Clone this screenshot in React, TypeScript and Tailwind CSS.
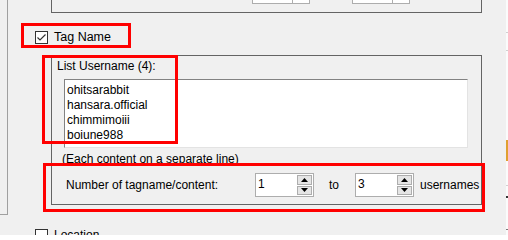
const font = { fontFamily: '"Liberation Sans", Arial, sans-serif' };

function Check({ checked }: { checked?: boolean }) {
  return (
    <div className="flex h-[13px] w-[13px] shrink-0 items-center justify-center border border-[#333333] bg-white">
      {checked && (
        <svg width="11" height="11" viewBox="0 0 11 11">
          <path d="M1.5 5.5 L4 8 L9.5 2.5" fill="none" stroke="#333333" strokeWidth="1.2" />
        </svg>
      )}
    </div>
  );
}

function Spin({ value }: { value: string }) {
  return (
    <div className="flex h-[24px] w-[59px] shrink-0 border border-[#adadad] bg-white">
      <div className="flex-1 pl-[2px] leading-[20px] text-black">{value}</div>
      <div className="my-[1px] mr-[1px] flex w-[15px] flex-col gap-[1px]">
        <div className="flex flex-1 items-center justify-center border border-[#adadad] bg-[#e5e5e5]">
          <svg width="7" height="4" viewBox="0 0 7 4"><path d="M0 4 L3.5 0 L7 4 Z" fill="#000" /></svg>
        </div>
        <div className="flex flex-1 items-center justify-center border border-[#adadad] bg-[#e5e5e5]">
          <svg width="7" height="4" viewBox="0 0 7 4"><path d="M0 0 L7 0 L3.5 4 Z" fill="#000" /></svg>
        </div>
      </div>
    </div>
  );
}

const names = ["ohitsarabbit", "hansara.official", "chimmimoiii", "boiune988"];

export default function App() {
  return (
    <div
      className="relative flex h-[235px] w-[508px] overflow-hidden bg-[#f0f0f0] text-[12px] text-black"
      style={font}
    >
      {/* left panel edge */}
      <div className="h-[215px] w-[8px] shrink-0 border-b border-r border-[#a0a0a0]" />

      {/* main column */}
      <div className="flex w-[498px] shrink-0 flex-col">
        {/* previous group box (bottom only) */}
        <div className="ml-[43px] flex h-[13px] w-[431px] shrink-0 border-x border-b border-[#646464]">
          <div className="ml-[200px] flex h-[4px] w-[58px] border-x border-b border-[#adadad] bg-white">
            <div className="ml-auto w-[17px] border-l border-[#adadad]" />
          </div>
          <div className="ml-[42px] flex h-[4px] w-[58px] border-x border-b border-[#adadad] bg-white">
            <div className="ml-auto w-[17px] border-l border-[#adadad]" />
          </div>
        </div>

        {/* Tag Name checkbox */}
        <div className="ml-[27px] mt-[18px] flex h-[13px] shrink-0 items-center gap-[6px]">
          <Check checked />
          <span className="text-[12.5px] leading-[15px]">Tag Name</span>
        </div>

        {/* group box */}
        <div className="ml-[43px] mt-[11px] flex h-[150px] w-[431px] shrink-0 flex-col border border-[#646464]">
          <div className="ml-[5px] mt-[3px] shrink-0 leading-[15px]">List Username (4):</div>
          <div className="ml-[12px] mt-[5px] h-[69px] w-[404px] shrink-0 border border-b-[#e3e3e3] border-l-[#828282] border-r-[#e3e3e3] border-t-[#828282] bg-white pl-[2px] pt-[3px]">
            {names.map((n) => (
              <div key={n} className="leading-[15px]">{n}</div>
            ))}
          </div>
          <div className="ml-[10px] mt-[4px] shrink-0 leading-[15px]">(Each content on a separate line)</div>
          <div className="ml-[14px] mt-[6px] flex shrink-0 items-center">
            <span className="w-[189px] leading-[15px]">Number of tagname/content:</span>
            <Spin value="1" />
            <span className="ml-[15px] w-[26px] leading-[15px]">to</span>
            <Spin value="3" />
            <span className="ml-[6px] leading-[15px]">usernames</span>
          </div>
        </div>

        {/* Location checkbox */}
        <div className="ml-[27px] mt-[24px] flex h-[13px] shrink-0 items-center gap-[6px]">
          <Check />
          <span className="leading-[15px]">Location</span>
        </div>
      </div>

      {/* right neighbouring panel sliver */}
      <div className="relative flex-1 bg-[#fbfbfb]">
        <div className="absolute left-0 top-[32px] h-px w-full bg-[#d0d0d0]" />
        <div className="absolute left-0 top-[50px] h-px w-full bg-[#d0d0d0]" />
        <div className="absolute left-0 top-[140px] h-[21px] w-full bg-[#e0a030]" />
        <div className="absolute left-0 top-[185px] h-px w-full bg-[#d0d0d0]" />
        <div className="absolute left-0 top-[196px] h-[2px] w-full bg-[#333]" />
        <div className="absolute left-0 top-[229px] h-px w-full bg-[#777]" />
      </div>

      {/* red annotation boxes */}
      <div className="absolute left-[21px] top-[23px] h-[25px] w-[110px] border-[3px] border-[#ff0000]" />
      <div className="absolute left-[42px] top-[55px] h-[89px] w-[136px] border-[3px] border-[#ff0000]" />
      <div className="absolute left-[43px] top-[163px] h-[49px] w-[442px] border-[3px] border-[#ff0000]" />
    </div>
  );
}
